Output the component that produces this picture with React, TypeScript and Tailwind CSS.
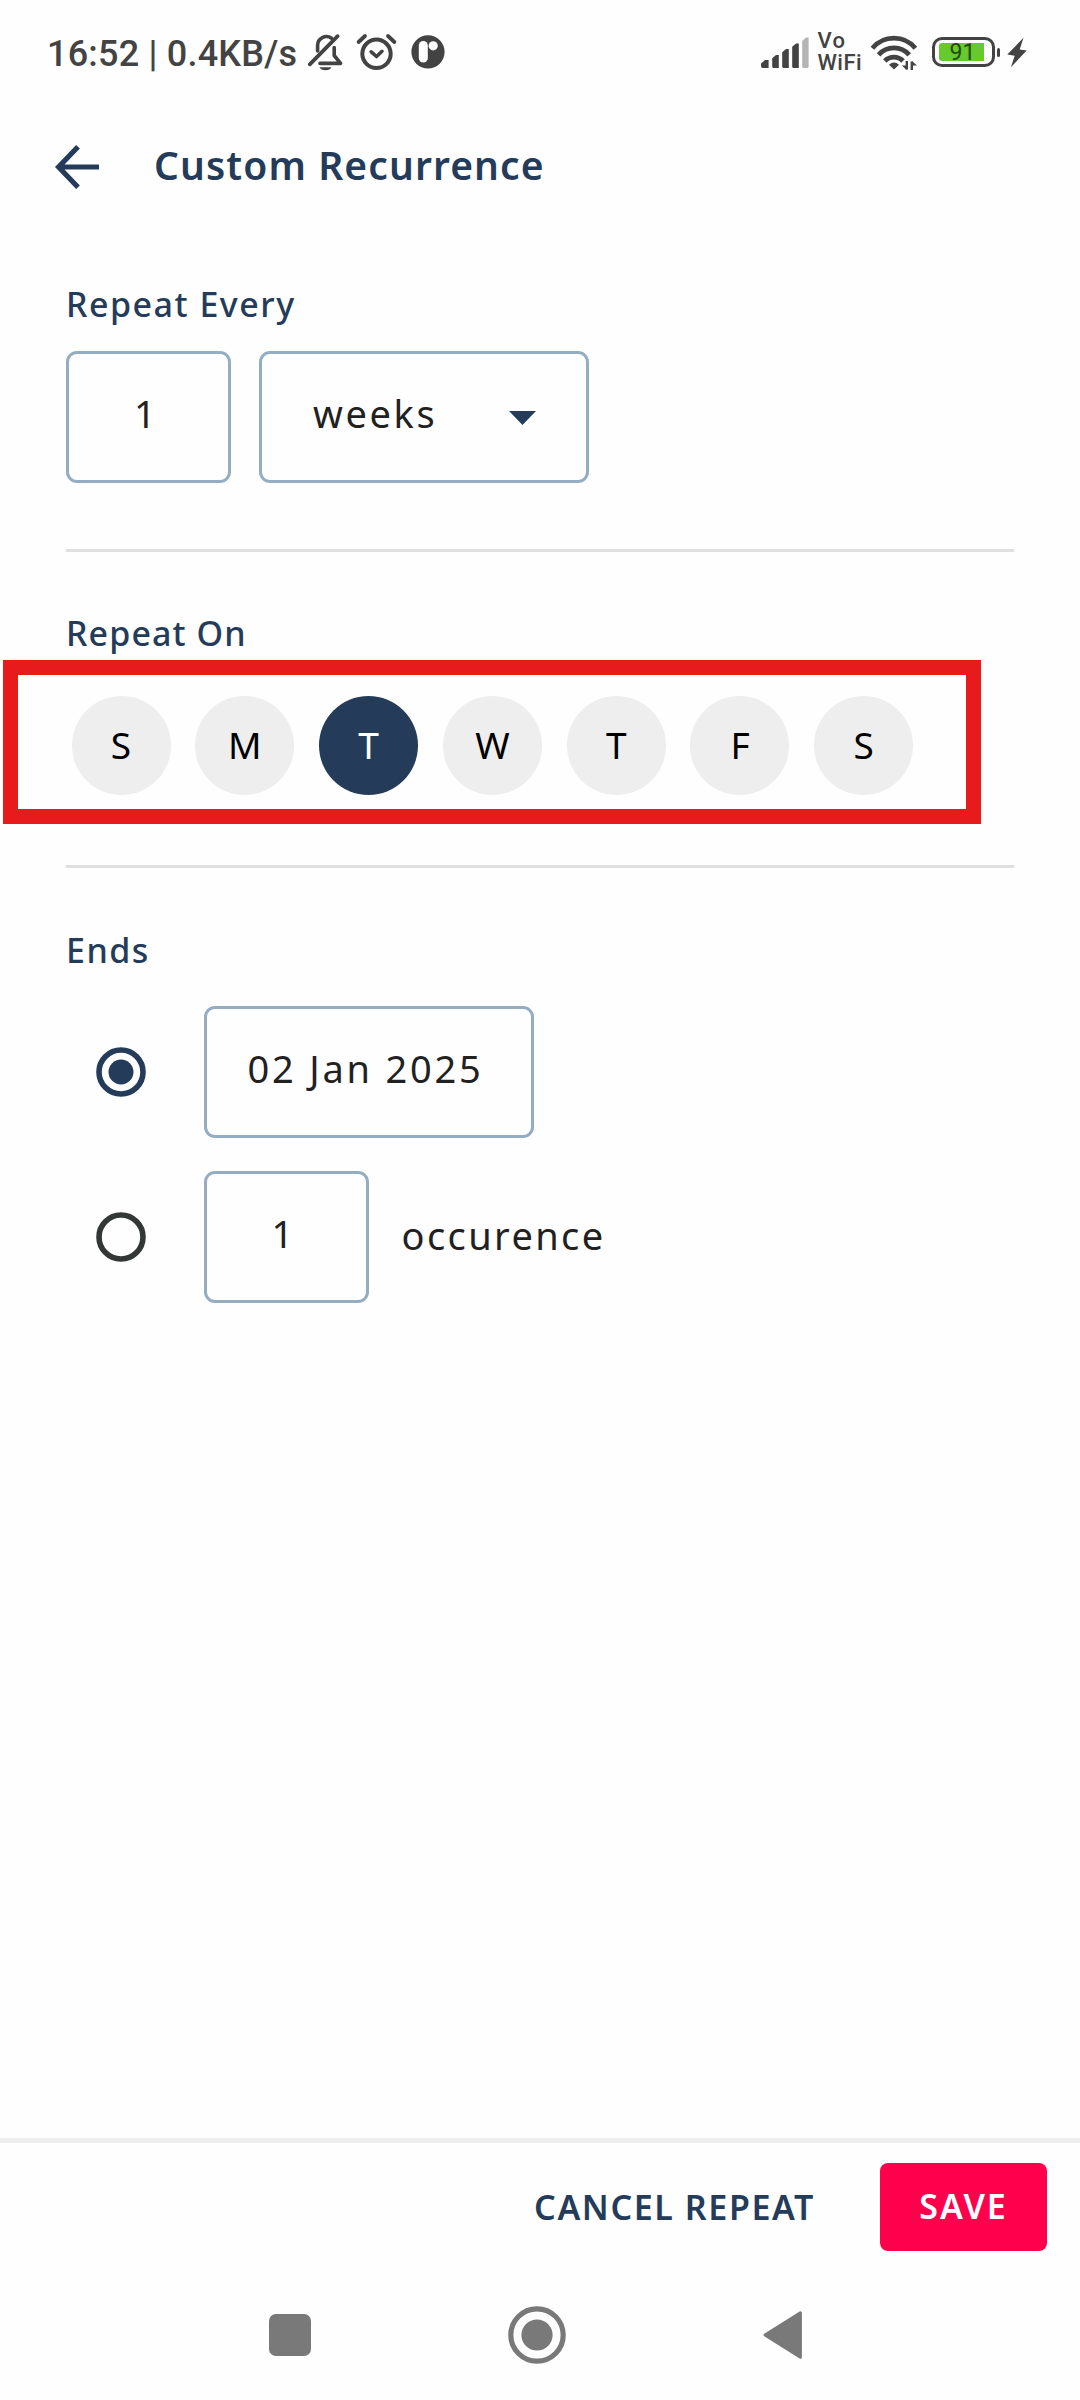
import React from "react";

const days = [
  { label: "S", active: false },
  { label: "M", active: false },
  { label: "T", active: true },
  { label: "W", active: false },
  { label: "T", active: false },
  { label: "F", active: false },
  { label: "S", active: false },
];

function NotificationIcons() {
  return (
    <svg className="ml-[7px] h-11 w-[142px]" viewBox="306 30 142 44" fill="none" stroke="#434343" strokeLinecap="round" strokeLinejoin="round">
      {/* muted bell */}
      <path d="M317.6 51V45.5a8.8 8.8 0 0 1 14-7.2" strokeWidth="3.6" />
      <path d="M309.8 64.3 337.6 36.2" strokeWidth="3.8" />
      <path d="M334.2 47.5V55.5L340.6 63.4H320" strokeWidth="3.6" />
      <path d="M319.5 67.3h12a6.3 4.2 0 0 1-12 0z" fill="#434343" stroke="none" />
      {/* alarm clock */}
      <circle cx="376.5" cy="53.8" r="14.2" strokeWidth="4" />
      <path d="M371.2 51.8 376.5 56.5 382 51.3" strokeWidth="3.6" />
      <path d="M358.6 42 365 36M388 36 394.4 42" strokeWidth="3.8" />
      {/* app badge */}
      <circle cx="428" cy="51.9" r="16.6" fill="#434343" stroke="none" />
      <rect x="418.8" y="41" width="9" height="21.6" rx="4.5" fill="#fff" stroke="none" />
      <circle cx="433.2" cy="45.8" r="4.6" fill="#fff" stroke="none" />
    </svg>
  );
}

function SignalIcon() {
  return (
    <svg className="h-11 w-12" viewBox="762 30 48 44" fill="#434343">
      <path d="M762 66V63.5L766 60H769.6V68H764Q762 68 762 66z" />
      <path d="M773.2 58.2 777 55H779.8V68H774.2l-1-1z" />
      <path d="M783.2 52.2 787 49H789.8V68H784.2l-1-1z" />
      <path d="M793.2 46.7 797 43.5H799.8V68H794.2l-1-1z" />
      <path d="M803.2 41 807 37.6H809.6V67l-1 1H804.2l-1-1z" fill="#b4b4b4" />
    </svg>
  );
}

function WifiIcon() {
  return (
    <svg className="ml-2 h-11 w-[50px]" viewBox="869 30 50 44" fill="none" stroke="#434343" strokeWidth="4.8">
      <path d="M872.4 48.2A28 28 0 0 1 915.4 48.2" />
      <path d="M878.6 54.8A20.5 20.5 0 0 1 909.2 54.8" />
      <path d="M884.8 61A12.6 12.6 0 0 1 903 61" />
      <path d="M889 64.8Q894 60.2 899 64.8L894 69.4z" fill="#434343" stroke="none" />
      <path d="M906.8 61V69.6M911.8 70V61.4" strokeWidth="2.4" />
      <path d="M901.8 65.6H906.6V70zM917 65.4H912V61z" fill="#434343" stroke="none" />
    </svg>
  );
}

function BatteryIcon() {
  return (
    <div className="ml-[13px] flex items-center">
      <div className="flex h-[30px] w-[63px] items-center rounded-[10px] border-[3px] border-[#434343] pl-1">
        <div className="flex h-[18px] w-[45px] items-center justify-center rounded-l-[3px] bg-[#66c92c] pl-[3px]">
          <span className="font-[Roboto] text-[23px] leading-none text-[#224a10]">91</span>
        </div>
      </div>
      <div className="ml-0.5 h-[9px] w-[3.5px] rounded-[1.5px] bg-[#434343]" />
      <svg className="ml-[7px] h-11 w-5" viewBox="1007.5 30 20 44" fill="#434343">
        <path d="M1024 37.8 1007.8 54.4 1015.2 55.8 1011.4 67.2 1027.2 50.6 1020.2 49.4z" />
      </svg>
    </div>
  );
}

function StatusBar() {
  return (
    <header className="flex h-[104px] items-center pr-[53px] pl-[47px]">
      <div className="flex w-full items-center">
        <span className="w-[252px] pt-[3px] font-[Roboto] text-[36px] leading-[44px] font-medium tracking-[0.2px] whitespace-nowrap text-[#434343]">
          16:52 | 0.4KB/s
        </span>
        <NotificationIcons />
        <div className="ml-auto flex items-center">
          <SignalIcon />
          <div className="ml-[9px] flex w-[43px] flex-col font-[Roboto] text-[22px] leading-[22px] font-medium text-[#434343]">
            <span className="tracking-[1.2px]">Vo</span>
            <span className="tracking-[0.5px]">WiFi</span>
          </div>
          <WifiIcon />
          <BatteryIcon />
        </div>
      </div>
    </header>
  );
}

const label = "h-11 text-[34px] leading-[44px] font-medium text-[#243c5a]";
const field = "flex h-[132px] items-center rounded-[11px] border-[3px] border-[#94adc0] pb-[7px] text-[38px] text-[#212121]";

function Radio({ checked }: { checked: boolean }) {
  return (
    <svg className="h-[50px] w-[50px]" viewBox="0 0 50 50" fill="none">
      <circle cx="25" cy="25" r="22" stroke={checked ? "#243c5a" : "#333836"} strokeWidth="5.6" />
      {checked && <circle cx="25" cy="25" r="12.5" fill="#243c5a" />}
    </svg>
  );
}

export default function App() {
  return (
    <div className="flex h-[2400px] w-[1080px] flex-col overflow-hidden bg-[#fefefe] font-['Noto_Sans',sans-serif]">
      <StatusBar />

      <div className="flex h-[122px] items-center pl-[55px]">
        <svg className="mt-[3px] h-11 w-11" viewBox="0 0 44 44" fill="none" stroke="#243c5a" strokeWidth="5.2">
          <path d="M23 1.8 3.6 22 23 42.2M4 22H44" />
        </svg>
        <h1 className="ml-[55px] pb-[1px] text-[39px] leading-[52px] font-semibold tracking-[1.1px] text-[#243c5a]">Custom Recurrence</h1>
      </div>

      <main className="flex flex-1 flex-col px-[66px]">
        <section className="mt-[56px]">
          <h2 className={`${label} tracking-[1.5px]`}>Repeat Every</h2>
          <div className="mt-[25px] flex gap-[27.5px]">
            <div className={`${field} w-[165px] pl-[65px]`}>1</div>
            <div className={`${field} w-[330px] justify-between pr-[50px] pl-[51.5px] tracking-[2.6px]`}>
              weeks
              <svg className="mt-2 h-[14px] w-[27px]" viewBox="0 0 27 14" fill="#243c5a">
                <path d="M0 0H27L13.5 14z" />
              </svg>
            </div>
          </div>
        </section>

        <div className="mt-[66px] h-[3px] bg-[#e0e0e0]" />

        <section className="mt-[59px]">
          <h2 className={`${label} tracking-[1.1px]`}>Repeat On</h2>
          <div className="relative mt-[41px] flex gap-[24.8px] pl-[5.5px]">
            {days.map((day, i) => (
              <div
                key={i}
                className={`flex h-[99px] w-[99px] shrink-0 items-center justify-center rounded-full pb-[2px] text-[37px] ${
                  day.active ? "bg-[#243c5a] text-white" : "bg-[#eeeeee] text-black"
                }`}
              >
                {day.label}
              </div>
            ))}
            {/* highlight frame around the weekday picker */}
            <div className="absolute -top-[36px] -left-[63px] h-[164px] w-[977.5px] border-[15px] border-[#e71b1b]" />
          </div>
        </section>

        <div className="mt-[70px] h-[3px] bg-[#e0e0e0]" />

        <section className="mt-[60px]">
          <h2 className={`${label} tracking-[1.5px]`}>Ends</h2>
          <div className="mt-[34px] flex items-center pl-[30px]">
            <Radio checked />
            <div className={`${field} ml-[57.5px] w-[330px] pl-[41px] tracking-[2.8px] whitespace-nowrap`}>02 Jan 2025</div>
          </div>
          <div className="mt-[33px] flex items-center pl-[30px]">
            <Radio checked={false} />
            <div className={`${field} ml-[57.5px] w-[165px] pl-[65px]`}>1</div>
            <span className="ml-[33px] pb-[3px] text-[38px] tracking-[2.4px] text-[#212121]">occurence</span>
          </div>
        </section>
      </main>

      <footer className="flex h-[132px] items-center justify-end border-t-[5px] border-[#eeeeee] pr-[33px]">
        <button className="text-[34px] leading-[44px] font-semibold tracking-[1.6px] whitespace-nowrap text-[#243c5a]">CANCEL REPEAT</button>
        <button className="ml-[65px] flex h-[88px] w-[167px] items-center justify-center rounded-[8px] bg-[#ff004c] text-[34px] font-semibold tracking-[2px] text-white">
          SAVE
        </button>
      </footer>

      <nav className="flex h-[130px] items-center pl-[269px]">
        <div className="h-[42px] w-[42px] rounded-[7px] bg-[#797979]" />
        <svg className="ml-[196.5px] h-[58px] w-[58px]" viewBox="0 0 58 58" fill="none">
          <circle cx="29" cy="29" r="26.2" stroke="#797979" strokeWidth="5.2" />
          <circle cx="29" cy="29" r="15.6" fill="#797979" />
        </svg>
        <svg className="ml-[197px] h-12 w-[40px]" viewBox="0 0 40 48" fill="#797979" stroke="#797979" strokeWidth="3" strokeLinejoin="round">
          <path d="M2 24 37.4 1.8V46.2z" />
        </svg>
      </nav>
    </div>
  );
}
